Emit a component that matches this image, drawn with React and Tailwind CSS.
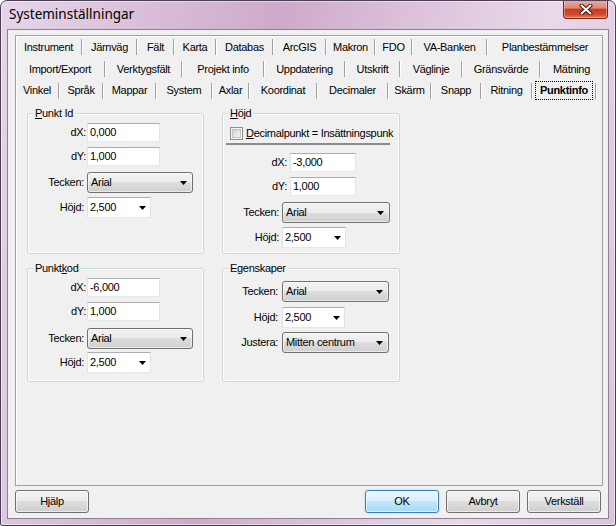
import React from "react";

const F = "font-['Liberation_Sans',Arial,sans-serif]";

const tabRows = [
  {
    h: "h-[22px]",
    tabs: [
      ["Instrument", "w-[67px]"],
      ["Järnväg", "w-[55px]"],
      ["Fält", "w-[37px]"],
      ["Karta", "w-[42px]"],
      ["Databas", "w-[57px]"],
      ["ArcGIS", "w-[53px]"],
      ["Makron", "w-[49px]"],
      ["FDO", "w-[37px]"],
      ["VA-Banken", "w-[75px]"],
      ["Planbestämmelser", "w-[114px]", "nosep"],
    ],
  },
  {
    h: "h-[22px]",
    tabs: [
      ["Import/Export", "w-[90px]"],
      ["Verktygsfält", "w-[77px]"],
      ["Projekt info", "w-[82px]"],
      ["Uppdatering", "w-[81px]"],
      ["Utskrift", "w-[55px]"],
      ["Väglinje", "w-[62px]"],
      ["Gränsvärde", "w-[78px]"],
      ["Mätning", "w-[61px]", "nosep"],
    ],
  },
  {
    h: "h-[21px]",
    tabs: [
      ["Vinkel", "w-[44px]"],
      ["Språk", "w-[44px]"],
      ["Mappar", "w-[53px]"],
      ["System", "w-[56px]"],
      ["Axlar", "w-[37px]"],
      ["Koordinat", "w-[68px]"],
      ["Decimaler", "w-[71px]"],
      ["Skärm", "w-[43px]"],
      ["Snapp", "w-[50px]"],
      ["Ritning", "w-[51px]"],
      ["Punktinfo", "w-[64px]", "selected"],
    ],
  },
];

function Arrow() {
  return (
    <svg width="7" height="4" viewBox="0 0 7 4" className="shrink-0">
      <path d="M0 0H7L3.5 4Z" fill="#000" />
    </svg>
  );
}

function TextBox({ value, w }) {
  return (
    <div
      className={`${w} h-[19px] bg-white border border-[#e2e3ea] border-t-[#abadb3] border-b-[#e3e9ef] flex items-center pl-[2px] leading-none`}
    >
      {value}
    </div>
  );
}

function DropList({ value, w }) {
  return (
    <div
      className={`${w} h-[21px] rounded-[3px] border border-[#707070] bg-[linear-gradient(#f2f2f2_0%,#ebebeb_50%,#dddddd_50%,#cfcfcf_100%)] shadow-[inset_0_0_0_1px_rgba(255,255,255,0.55)] flex items-center pl-[3px] pr-[5px] leading-none`}
    >
      <span className="flex-1">{value}</span>
      <Arrow />
    </div>
  );
}

function EditCombo({ value, w }) {
  return (
    <div
      className={`${w} h-[21px] bg-white border border-[#e2e3ea] border-t-[#abadb3] border-b-[#e3e9ef] flex items-center pl-[2px] pr-[4px] leading-none`}
    >
      <span className="flex-1">{value}</span>
      <Arrow />
    </div>
  );
}

function Row({ label, lw, pr, mt, children }) {
  return (
    <div className={`flex items-center ${mt}`}>
      <div className={`${lw} ${pr} text-right leading-none`}>{label}</div>
      {children}
    </div>
  );
}

function Group({ legend, children }) {
  return (
    <div className="relative h-full rounded-[3px] border border-[#cdd5da] shadow-[inset_1px_1px_0_#fff,inset_-1px_-1px_0_#fff]">
      <span className="absolute left-[5px] -top-[8px] px-[2px] bg-[#f0f0f0] leading-[14px]">
        {legend}
      </span>
      <div className="flex flex-col">{children}</div>
    </div>
  );
}

function Button({ children, primary, w }) {
  return (
    <div
      className={`${w} h-[23px] rounded-[3px] border flex items-center justify-center leading-none ${
        primary
          ? "border-[#3c7fb1] bg-[linear-gradient(#eaf6fd_0%,#d9f0fc_50%,#bee6fd_50%,#a7d9f5_100%)] shadow-[inset_0_0_0_1px_rgba(255,255,255,0.7),0_0_2px_#8fd0f2]"
          : "border-[#707070] bg-[linear-gradient(#f2f2f2_0%,#ebebeb_50%,#dddddd_50%,#cfcfcf_100%)] shadow-[inset_0_0_0_1px_rgba(255,255,255,0.6)]"
      }`}
    >
      {children}
    </div>
  );
}

export default function App() {
  return (
    <div className={`w-[616px] h-[526px] ${F} text-[11px] tracking-[-0.3px] text-black`}>
      <div className="w-[616px] h-[526px] border border-[#4e4054] rounded-t-[7px] rounded-b-[2px] bg-[linear-gradient(100deg,#e6d6e8_0%,#d8bdd8_22%,#cdaacb_40%,#dbc1da_58%,#e9d9e9_78%,#dbc3dc_100%)] shadow-[inset_0_0_0_1px_rgba(255,255,255,0.45)] flex flex-col overflow-hidden">
        {/* Title bar */}
        <div className="h-[28px] flex items-start shrink-0">
          <div className="pl-[8px] pt-[5px] font-['Noto_Sans',sans-serif] text-[13.5px] tracking-normal leading-[17px] text-black">
            Systeminställningar
          </div>
          <div className="ml-auto mr-[7px] -mt-px w-[45px] h-[19px] rounded-b-[4px] border border-t-0 border-[#7d2418] bg-[linear-gradient(#eab0a2_0%,#de8670_45%,#c73c22_52%,#cf4b2f_80%,#e27a56_100%)] shadow-[inset_0_0_0_1px_rgba(255,255,255,0.35)] flex items-center justify-center">
            <svg width="14" height="11" viewBox="0 0 14 11">
              <path d="M2.5 1.5L11.5 9.5M11.5 1.5L2.5 9.5" stroke="#4a1208" strokeWidth="4" strokeLinecap="round" />
              <path d="M2.5 1.5L11.5 9.5M11.5 1.5L2.5 9.5" stroke="#ffffff" strokeWidth="2" strokeLinecap="round" />
            </svg>
          </div>
        </div>

        {/* Client area */}
        <div className="ml-[6px] w-[602px] h-[490px] border border-[#8d8090] bg-[#f0f0f0] flex flex-col shrink-0">
          {/* Tab control */}
          <div className="ml-[7px] mt-[5px] w-[588px] h-[451px] border border-[#a0a0a0] shadow-[inset_1px_1px_0_#fff] flex flex-col">
            {tabRows.map((row, ri) => (
              <div key={ri} className={`flex ${row.h}`}>
                {row.tabs.map(([name, w, flag]) => (
                  <div key={name} className={`${w} h-full flex items-center`}>
                    {flag === "selected" ? (
                      <div className="flex-1 mx-[2px] h-[19px] border border-dotted border-black flex items-center justify-center font-bold leading-none">
                        {name}
                      </div>
                    ) : (
                      <div className="flex-1 text-center leading-none">{name}</div>
                    )}
                    {flag !== "nosep" && (
                      <div className="w-[2px] h-[16px] border-l border-[#a0a0a0] bg-white shrink-0" />
                    )}
                  </div>
                ))}
              </div>
            ))}

            {/* Panel content */}
            <div className="grid grid-cols-[177px_178px] grid-rows-[141px_114px] gap-x-[18px] gap-y-[14px] pl-[11px] pt-[12px]">
              <Group
                legend={
                  <>
                    <span className="underline">P</span>unkt Id
                  </>
                }
              >
                <Row label="dX:" lw="w-[59px]" pr="pr-[1px]" mt="mt-[9px]">
                  <TextBox value="0,000" w="w-[73px]" />
                </Row>
                <Row label="dY:" lw="w-[59px]" pr="pr-[1px]" mt="mt-[5px]">
                  <TextBox value="1,000" w="w-[73px]" />
                </Row>
                <Row label="Tecken:" lw="w-[59px]" pr="pr-[3px]" mt="mt-[6px]">
                  <DropList value="Arial" w="w-[106px]" />
                </Row>
                <Row label="Höjd:" lw="w-[59px]" pr="pr-[3px]" mt="mt-[4px]">
                  <EditCombo value="2,500" w="w-[64px]" />
                </Row>
              </Group>

              <Group
                legend={
                  <>
                    <span className="underline">H</span>öjd
                  </>
                }
              >
                <div className="mt-[13px] ml-[7px] flex items-center whitespace-nowrap">
                  <div className="w-[13px] h-[13px] border border-[#8e8f8f] bg-[#f4f4f4] p-[1px] shrink-0">
                    <div className="w-full h-full border border-[#c0c4c9] bg-[linear-gradient(135deg,#cfd3d8,#f7f7f7)]" />
                  </div>
                  <span className="ml-[3px] leading-none">
                    <span className="underline">D</span>ecimalpunkt = Insättningspunk
                  </span>
                </div>
                <div className="mt-[3px] ml-[3px] w-[164px] h-[2px] bg-[#8c8c8c]" />
                <Row label="dX:" lw="w-[65px]" pr="pr-[1px]" mt="mt-[8px]">
                  <div className="ml-[2px]">
                    <TextBox value="-3,000" w="w-[66px]" />
                  </div>
                </Row>
                <Row label="dY:" lw="w-[65px]" pr="pr-[1px]" mt="mt-[5px]">
                  <div className="ml-[2px]">
                    <TextBox value="1,000" w="w-[66px]" />
                  </div>
                </Row>
                <Row label="Tecken:" lw="w-[59px]" pr="pr-[3px]" mt="mt-[6px]">
                  <DropList value="Arial" w="w-[108px]" />
                </Row>
                <Row label="Höjd:" lw="w-[59px]" pr="pr-[3px]" mt="mt-[4px]">
                  <EditCombo value="2,500" w="w-[64px]" />
                </Row>
              </Group>

              <Group
                legend={
                  <>
                    Punkt<span className="underline">k</span>od
                  </>
                }
              >
                <Row label="dX:" lw="w-[59px]" pr="pr-[1px]" mt="mt-[9px]">
                  <TextBox value="-6,000" w="w-[73px]" />
                </Row>
                <Row label="dY:" lw="w-[59px]" pr="pr-[1px]" mt="mt-[5px]">
                  <TextBox value="1,000" w="w-[73px]" />
                </Row>
                <Row label="Tecken:" lw="w-[59px]" pr="pr-[3px]" mt="mt-[7px]">
                  <DropList value="Arial" w="w-[106px]" />
                </Row>
                <Row label="Höjd:" lw="w-[59px]" pr="pr-[3px]" mt="mt-[3px]">
                  <EditCombo value="2,500" w="w-[64px]" />
                </Row>
              </Group>

              <Group legend="Egenskaper">
                <Row label="Tecken:" lw="w-[59px]" pr="pr-[4px]" mt="mt-[12px]">
                  <DropList value="Arial" w="w-[107px]" />
                </Row>
                <Row label="Höjd:" lw="w-[59px]" pr="pr-[4px]" mt="mt-[5px]">
                  <EditCombo value="2,500" w="w-[63px]" />
                </Row>
                <Row label="Justera:" lw="w-[59px]" pr="pr-[4px]" mt="mt-[4px]">
                  <DropList value="Mitten centrum" w="w-[107px]" />
                </Row>
              </Group>
            </div>
          </div>

          {/* Bottom buttons */}
          <div className="flex mt-[4px] ml-[7px] mr-[7px]">
            <Button w="w-[74px]">Hjälp</Button>
            <div className="ml-auto flex gap-[7px]">
              <Button w="w-[74px]" primary>
                OK
              </Button>
              <Button w="w-[74px]">Avbryt</Button>
              <Button w="w-[74px]">Verkställ</Button>
            </div>
          </div>
        </div>
      </div>
    </div>
  );
}
